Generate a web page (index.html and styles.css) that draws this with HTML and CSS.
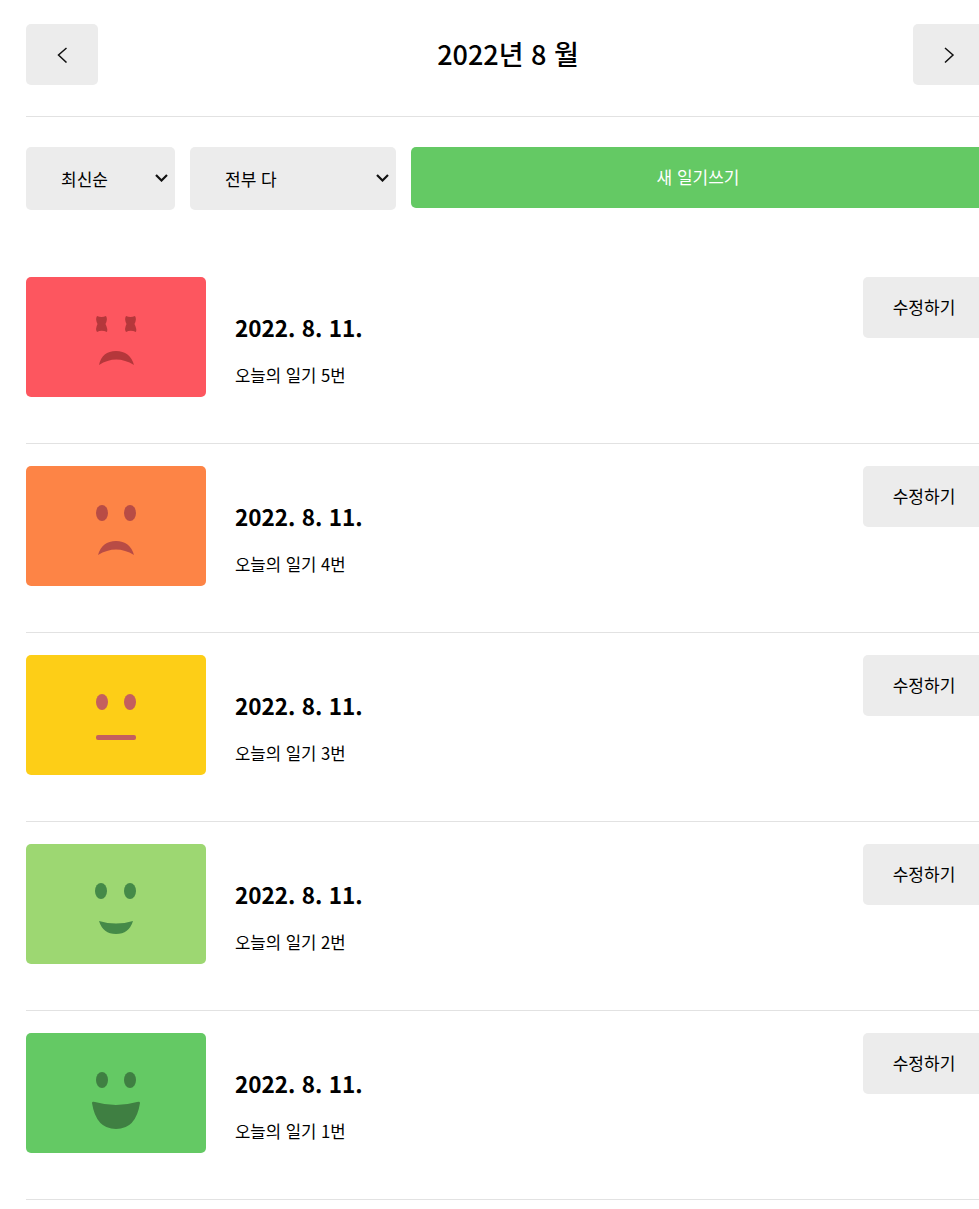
FILE: index.html
```html
<!DOCTYPE html>
<html lang="ko">
<head>
<meta charset="utf-8">
<title>감정 일기장</title>
<link rel="stylesheet" href="styles.css">
</head>
<body>
<div class="app">
  <header class="head">
    <button class="btn nav" aria-label="이전 달"><svg width="12" height="17" viewBox="0 0 12 17"><path d="M10.500 2 2.500 9 10.500 16.500" class="chev"/></svg></button>
    <h1 class="title">2022년 8 월</h1>
    <button class="btn nav" aria-label="다음 달"><svg width="12" height="17" viewBox="0 0 12 17"><path d="M2 2 10 9 2 16.500" class="chev"/></svg></button>
  </header>
  <section class="filters">
    <div class="pick pick-sort">
      <select class="menu"><option>최신순</option><option>오래된 순</option></select>
      <svg class="arrow" width="13" height="8" viewBox="0 0 13 8"><path d="M1 1 6.500 6.500 12 1"/></svg>
    </div>
    <div class="pick pick-emotion">
      <select class="menu"><option>전부 다</option><option>좋은 감정만</option><option>안좋은 감정만</option></select>
      <svg class="arrow" width="13" height="8" viewBox="0 0 13 8"><path d="M1 1 6.500 6.500 12 1"/></svg>
    </div>
    <button class="btn new">새 일기쓰기</button>
  </section>
  <main class="list">
    <article class="item">
      <svg class="face e5" viewBox="0 0 180 120" width="180" height="120"><rect class="bg" width="180" height="120"/><path class="fx" d="M71 39Q75.500 41 80 39Q82 42 79.500 47Q82 52 81 55Q75.500 52.500 71 55Q69 52 71.500 47Q69 42 71 39Z"/><path class="fx" d="M100 39Q104.500 41 109 39Q111 42 108.500 47Q111 52 110 55Q104.500 52.500 100 55Q98 52 100.500 47Q98 42 100 39Z"/><path class="fx" d="M73 88Q76 74 90 74Q104 74 108 88Q90 77 73 88Z"/></svg>
      <div class="info"><div class="date">2022. 8. 11.</div><div class="text">오늘의 일기 5번</div></div>
      <button class="btn edit">수정하기</button>
    </article>
    <article class="item">
      <svg class="face e4" viewBox="0 0 180 120" width="180" height="120"><rect class="bg" width="180" height="120"/><ellipse class="fx" cx="76" cy="47" rx="6" ry="8"/><ellipse class="fx" cx="104" cy="47" rx="6" ry="8"/><path class="fx" d="M72 89Q76 75 90 75Q104 75 108 89Q90 78 72 89Z"/></svg>
      <div class="info"><div class="date">2022. 8. 11.</div><div class="text">오늘의 일기 4번</div></div>
      <button class="btn edit">수정하기</button>
    </article>
    <article class="item">
      <svg class="face e3" viewBox="0 0 180 120" width="180" height="120"><rect class="bg" width="180" height="120"/><ellipse class="fx" cx="76" cy="47" rx="6" ry="8"/><ellipse class="fx" cx="104" cy="47" rx="6" ry="8"/><rect class="fx" x="70" y="80" width="40" height="5" rx="2"/></svg>
      <div class="info"><div class="date">2022. 8. 11.</div><div class="text">오늘의 일기 3번</div></div>
      <button class="btn edit">수정하기</button>
    </article>
    <article class="item">
      <svg class="face e2" viewBox="0 0 180 120" width="180" height="120"><rect class="bg" width="180" height="120"/><ellipse class="fx" cx="75" cy="47" rx="6" ry="8"/><ellipse class="fx" cx="104" cy="47" rx="6" ry="8"/><path class="fx" d="M73 77Q90 82 107 77Q103 90 90 90Q77 90 73 77Z"/></svg>
      <div class="info"><div class="date">2022. 8. 11.</div><div class="text">오늘의 일기 2번</div></div>
      <button class="btn edit">수정하기</button>
    </article>
    <article class="item">
      <svg class="face e1" viewBox="0 0 180 120" width="180" height="120"><rect class="bg" width="180" height="120"/><ellipse class="fx" cx="76" cy="47" rx="6" ry="8"/><ellipse class="fx" cx="104" cy="47" rx="6" ry="8"/><path class="fx" d="M66 70Q66 68 69 69Q90 75 111 69Q114 68 114 70Q110 96 90 96Q70 96 66 70Z"/></svg>
      <div class="info"><div class="date">2022. 8. 11.</div><div class="text">오늘의 일기 1번</div></div>
      <button class="btn edit">수정하기</button>
    </article>
  </main>
</div>
</body>
</html>
```
FILE: styles.css
```css
html, body {
  margin: 0;
  background: #fff;
  overflow-x: hidden;
}
body {
  font-family: "Noto Sans CJK KR", "Noto Sans", sans-serif;
  color: #000;
}
.app {
  width: 959px;
  padding: 0 0 9px 26px;
}
.btn {
  border: 0;
  border-radius: 5px;
  background: #ececec;
  color: #000;
  font: 400 17px "Noto Sans CJK KR", "Noto Sans", sans-serif;
  padding: 0;
}
.head {
  display: flex;
  align-items: center;
  justify-content: space-between;
  padding: 24px 0 31px;
  border-bottom: 1px solid #e2e2e2;
}
.nav {
  width: 72px;
  height: 61px;
  display: flex;
  align-items: center;
  justify-content: center;
}
.chev {
  fill: none;
  stroke: #111;
  stroke-width: 1.5;
}
.title {
  margin: 0 0 2px 5px;
  font-size: 27px;
  line-height: 40px;
  font-weight: 500;
}
.filters {
  display: flex;
  align-items: flex-start;
  gap: 15px;
  margin-top: 30px;
}
.pick {
  position: relative;
  height: 63px;
}
.pick-sort { width: 149px; }
.pick-emotion { width: 206px; }
.menu {
  appearance: none;
  width: 100%;
  height: 100%;
  border: 0;
  border-radius: 5px;
  background-color: #ececec;
  color: #000;
  font: 400 17px "Noto Sans CJK KR", "Noto Sans", sans-serif;
  padding: 0 0 0 35px;
}
.arrow {
  position: absolute;
  top: 27px;
  right: 7px;
  fill: none;
  stroke: #111;
  stroke-width: 2.2;
  pointer-events: none;
}
.new {
  flex: 1;
  height: 61px;
  padding-bottom: 2px;
  background: #64c964;
  color: #fff;
}
.list { margin-top: 45px; }
.item {
  display: flex;
  align-items: flex-start;
  padding: 22px 0 46px;
  border-bottom: 1px solid #e2e2e2;
}
.face {
  display: block;
  flex: none;
  border-radius: 5px;
}
.e5 .bg { fill: #fd565f; }
.e5 .fx { fill: #b5373b; }
.e4 .bg { fill: #fd8446; }
.e4 .fx { fill: #b84c45; }
.e3 .bg { fill: #fdce17; }
.e3 .fx { fill: #c45f5e; }
.e2 .bg { fill: #9dd772; }
.e2 .fx { fill: #458a48; }
.e1 .bg { fill: #64c964; }
.e1 .fx { fill: #3f7f42; }
.info {
  flex: 1;
  margin-left: 29px;
  padding-top: 33px;
}
.date {
  font-size: 22.5px;
  line-height: 34px;
  font-weight: 700;
}
.text {
  margin-top: 19px;
  font-size: 16.7px;
  line-height: 24px;
}
.edit {
  flex: none;
  width: 122px;
  height: 61px;
  padding-bottom: 3px;
}
```
